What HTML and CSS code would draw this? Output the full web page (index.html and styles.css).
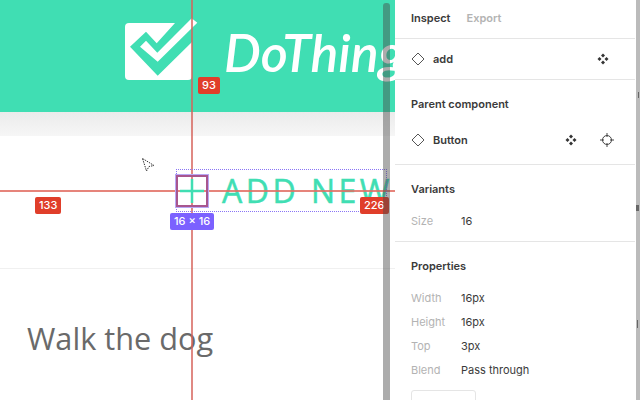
FILE: index.html
```html
<!doctype html>
<html lang="en">
<head>
    <meta charset="utf-8">
    <title>DoThings inspect</title>
    <link rel="stylesheet" href="styles.css">
</head>
<body>
    <div class="app">
        <main class="canvas">
            <header class="hero">
                <svg class="logo" viewBox="0 0 80 70" width="80" height="70">
                    <rect x="5" y="8" width="67" height="57" rx="4" fill="#fff"/>
                    <path fill="#40deb3" d="M10 31.700L26 16.700 36.700 28.300 55 8H72V27L37.700 60.700z"/>
                    <path fill="#fff" d="M20 31.700L26 25.700 37.300 37.700 71.700 3.300 77.300 7.700 37.700 46.700z"/>
                </svg>
                <span class="brand">DoThings</span>
            </header>
            <div class="shade"></div>
            <div class="add-row">
                <svg class="plus" viewBox="0 0 24 24" width="24" height="24">
                    <path d="M12 0v24M0 12h24" stroke="#40deb3" stroke-width="2.500" fill="none"/>
                </svg>
                <span class="add-label">ADD NEW</span>
            </div>
            <div class="task">Walk the dog</div>

            <!-- measure overlay -->
            <div class="guide-v"></div>
            <div class="guide-h"></div>
            <div class="frame-dots"></div>
            <div class="frame-sel"></div>
            <span class="tag tag-red tag-top">93</span>
            <span class="tag tag-red tag-left">133</span>
            <span class="tag tag-red tag-right">226</span>
            <span class="tag tag-purple tag-size">16 × 16</span>
            <svg class="cursor" viewBox="0 0 16 16" width="16" height="16">
                <path d="M2.500 1.500L14 8.500l-5 1-2.500 4.500z" fill="#fff" stroke="#333" stroke-width="1" stroke-dasharray="1.500 1"/>
            </svg>
            <div class="scrollbar"></div>
        </main>

        <aside class="panel">
            <nav class="tabs">
                <span class="tab-on">Inspect</span>
                <span class="tab-off">Export</span>
            </nav>
            <section class="layer">
                <svg class="diamond" viewBox="0 0 14 14" width="14" height="14"><path d="M7 1L13 7 7 13 1 7z"/></svg>
                <span class="layer-name">add</span>
                <svg class="comp" viewBox="0 0 12 12" width="12" height="12"><path d="M6 .5L8 2.500 6 4.500 4 2.500zM2.500 4L4.500 6 2.500 8 .5 6zM9.500 4L11.500 6 9.500 8 7.500 6zM6 7.500L8 9.500 6 11.500 4 9.500z"/></svg>
            </section>
            <section class="parent">
                <h3>Parent component</h3>
                <div class="parent-row">
                    <svg class="diamond" viewBox="0 0 14 14" width="14" height="14"><path d="M7 1L13 7 7 13 1 7z"/></svg>
                    <span class="layer-name">Button</span>
                    <svg class="comp" viewBox="0 0 12 12" width="12" height="12"><path d="M6 .5L8 2.500 6 4.500 4 2.500zM2.500 4L4.500 6 2.500 8 .5 6zM9.500 4L11.500 6 9.500 8 7.500 6zM6 7.500L8 9.500 6 11.500 4 9.500z"/></svg>
                    <svg class="target" viewBox="0 0 14 14" width="14" height="14"><circle cx="7" cy="7" r="4.500"/><path d="M7 0v4M7 10v4M0 7h4M10 7h4"/></svg>
                </div>
            </section>
            <section class="variants">
                <h3>Variants</h3>
                <dl class="props">
                    <dt>Size</dt><dd>16</dd>
                </dl>
            </section>
            <section class="properties">
                <h3>Properties</h3>
                <dl class="props">
                    <dt>Width</dt><dd>16px</dd>
                    <dt>Height</dt><dd>16px</dd>
                    <dt>Top</dt><dd>3px</dd>
                    <dt>Blend</dt><dd>Pass through</dd>
                </dl>
                <div class="copy-btn"></div>
            </section>
        </aside>
        <div class="edge">
            <i class="edge-mark mark-a"></i>
            <i class="edge-mark mark-b"></i>
            <i class="edge-mark mark-c"></i>
        </div>
    </div>
</body>
</html>
```

FILE: styles.css
```css
html, body {
    margin: 0;
    height: 100%;
    overflow: hidden;
    background: #fff;
}

.app {
    display: flex;
    width: 640px;
    height: 400px;
    overflow: hidden;
    font-family: 'Inter', sans-serif;
}

/* canvas */

.canvas {
    position: relative;
    flex: 0 0 395px;
    height: 400px;
    overflow: hidden;
    background: #fff;
}

.hero {
    display: flex;
    align-items: flex-start;
    gap: 24px;
    box-sizing: border-box;
    width: 395px;
    height: 112px;
    padding: 15px 0 0 120px;
    background: #40deb3;
}

.logo {
    flex: none;
}

.brand {
    margin-top: 7px;
    color: #fff;
    font: italic 600 52px/60px 'Lato', sans-serif;
    white-space: nowrap;
}

.shade {
    height: 24px;
    background: linear-gradient(#ebebeb, #f3f3f3 70%, #f6f6f6);
}

.add-row {
    display: flex;
    align-items: center;
    gap: 18px;
    box-sizing: border-box;
    height: 133px;
    padding: 0 0 22px 180px;
    border-bottom: 1px solid #f0f0f0;
}

/* the plus sits above the guides */
.plus {
    position: relative;
    z-index: 1;
    flex: none;
}

.add-label {
    color: #40deb3;
    font: 500 32px/36px 'Open Sans', sans-serif;
    letter-spacing: 3.500px;
    white-space: nowrap;
    -webkit-text-stroke: .5px #40deb3;
}

.task {
    padding: 48px 0 0 27px;
    color: #6a6a6a;
    font: 400 30.700px/42px 'Open Sans', sans-serif;
}

/* measure overlay */

.guide-v {
    position: absolute;
    top: 0;
    left: 191px;
    width: 2px;
    height: 400px;
    background: rgba(214, 98, 90, .75);
}

.guide-h {
    position: absolute;
    top: 190px;
    left: 0;
    width: 395px;
    height: 2px;
    background: rgba(226, 110, 100, .85);
}

.frame-dots {
    position: absolute;
    top: 169px;
    left: 176px;
    width: 209px;
    height: 41px;
    border: 1px dotted #8a75f5;
}

.frame-sel {
    position: absolute;
    top: 175px;
    left: 176px;
    width: 28px;
    height: 28px;
    border: 2px solid #a8568f;
    outline: 1px solid #b9a8f5;
}

.tag {
    position: absolute;
    padding: 0 4px;
    border-radius: 2px;
    color: #fff;
    font: 500 11px/17px 'Inter', sans-serif;
    white-space: nowrap;
}

.tag-red {
    background: #e03e2a;
}

.tag-purple {
    background: #7b61ff;
}

.tag-top {
    top: 77px;
    left: 198px;
}

.tag-left {
    top: 197px;
    left: 35px;
}

.tag-right {
    top: 197px;
    left: 360px;
}

.tag-size {
    top: 213px;
    left: 170px;
}

.cursor {
    position: absolute;
    top: 157px;
    left: 140px;
}

.scrollbar {
    position: absolute;
    top: 3px;
    left: 383px;
    width: 7px;
    height: 397px;
    border-radius: 3px 3px 0 0;
    background: rgba(70, 70, 70, .45);
}

/* right panel */

.panel {
    flex: 0 0 240px;
    height: 400px;
    overflow: hidden;
    color: #3a3a3a;
    font-size: 11px;
    line-height: 16px;
}

.panel section {
    box-sizing: border-box;
    padding: 0 16px;
    border-bottom: 1px solid #e5e5e5;
}

.panel h3 {
    margin: 0;
    font-size: 11px;
    font-weight: 600;
}

.tabs {
    display: flex;
    gap: 16px;
    box-sizing: border-box;
    height: 39px;
    padding: 10px 16px 0;
    border-bottom: 1px solid #e5e5e5;
    font-weight: 600;
}

.tab-off {
    color: #b3b3b3;
}

.panel .layer {
    display: flex;
    align-items: center;
    height: 41px;
}

.panel .parent {
    height: 85px;
    padding-top: 16px;
}

.parent-row {
    display: flex;
    align-items: center;
    margin-top: 20px;
}

.diamond {
    flex: none;
    margin-right: 8px;
}

.diamond path {
    fill: none;
    stroke: #555;
    stroke-width: 1;
}

.layer-name {
    flex: 1;
    font-weight: 600;
}

.comp {
    flex: none;
    fill: #333;
    margin-right: 10px;
}

.parent-row .comp {
    margin-right: 23px;
}

.target {
    flex: none;
    margin-right: 5px;
    fill: none;
    stroke: #444;
    stroke-width: 1;
}

.panel .variants {
    height: 77px;
    padding-top: 16px;
}

.panel .properties {
    height: 200px;
    padding-top: 16px;
    border-bottom: 0;
}

.props {
    display: grid;
    grid-template-columns: 50px 1fr;
    row-gap: 8px;
    margin: 16px 0 0;
}

.props dt {
    color: #b3b3b3;
}

.props dd {
    margin: 0;
}

.copy-btn {
    width: 63px;
    height: 30px;
    margin-top: 12px;
    border: 1px solid #e5e5e5;
    border-radius: 3px;
}

.edge {
    position: relative;
    flex: 0 0 4px;
    height: 400px;
    margin-left: 1px;
    background: #bbb;
}

.edge-mark {
    position: absolute;
    background: #666;
}

.mark-a {
    top: 92px;
    left: 2px;
    width: 1px;
    height: 6px;
}

.mark-b {
    top: 205px;
    left: 0;
    width: 3px;
    height: 6px;
}

.mark-c {
    top: 320px;
    left: 1px;
    width: 1px;
    height: 8px;
}
```
